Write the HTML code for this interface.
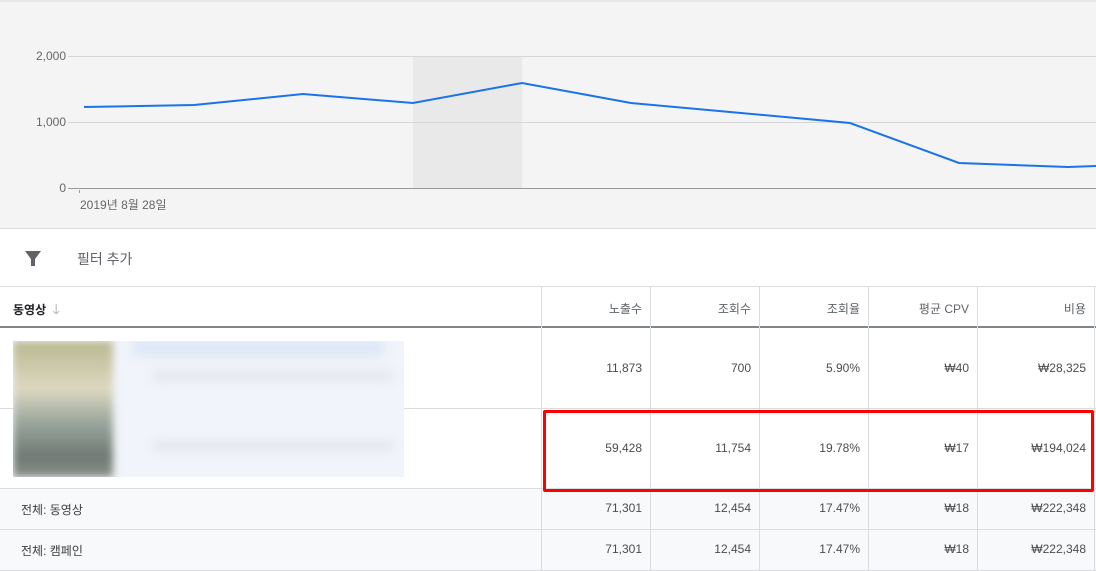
<!DOCTYPE html>
<html><head><meta charset="utf-8"><style>
body{margin:0;width:1096px;height:571px;overflow:hidden;font-family:"Liberation Sans","Noto Sans CJK KR",sans-serif;background:#fff;position:relative;color:#3c4043}
.abs{position:absolute}
.chart{left:0;top:0;width:1096px;height:229px;background:#f4f4f4;border-top:2px solid #e6e6e6;box-sizing:border-box;border-bottom:1px solid #ddd}
.yl{font-size:12px;color:#666;text-align:right;width:66px;left:0}
.vl{width:1px;background:#dadce0}
.hl{height:1px;background:#dadce0;left:0;width:1096px}
.c{font-size:12px;color:#4a4d50;text-align:right}
.h{color:#5f6368}
</style></head><body>
<div class="abs chart"></div>
<svg class="abs" style="left:0;top:0" width="1096" height="229">
<rect x="413" y="56" width="109" height="132" fill="#e9e9e9"/>
<line x1="68" y1="56.5" x2="1096" y2="56.5" stroke="#d6d6d6"/>
<line x1="68" y1="122.5" x2="1096" y2="122.5" stroke="#d6d6d6"/>
<line x1="68" y1="188.5" x2="1096" y2="188.5" stroke="#999"/>
<line x1="79.5" y1="190" x2="79.5" y2="193" stroke="#999"/>
<polyline fill="none" stroke="#1a73e8" stroke-width="2" points="84,107 194,105 303,94 413,103 522,83 631,103 741,113 850,123 959,163 1068,167 1096,166"/>
</svg>
<div class="abs yl" style="top:49px">2,000</div>
<div class="abs yl" style="top:115px">1,000</div>
<div class="abs yl" style="top:181px">0</div>
<div class="abs" style="left:80px;top:196px;font-size:12px;color:#666">2019년 8월 28일</div>
<svg class="abs" style="left:24px;top:250px" width="18" height="18"><path d="M1 1h16l-6 8v7h-4v-7z" fill="#5f6368"/></svg>
<div class="abs" style="left:77px;top:249px;font-size:14px;color:#5f6368">필터 추가</div>
<div class="abs hl" style="top:286px"></div>
<div class="abs" style="left:13px;top:299px;font-size:12px;font-weight:bold;color:#202124">동영상 <span style="color:#aaa;font-weight:normal;font-size:14px;margin-left:3px">🡓</span></div>
<div class="abs" style="left:0;top:326px;width:1096px;height:2px;background:#80868b"></div>
<div class="abs" style="left:0;top:488px;width:1096px;height:83px;background:#f8f9fa"></div>
<div class="abs hl" style="top:408px"></div>
<div class="abs hl" style="top:488px"></div>
<div class="abs hl" style="top:529px"></div>
<div class="abs hl" style="top:570px"></div>
<div class="abs vl" style="left:541px;top:287px;height:284px"></div>
<div class="abs vl" style="left:650px;top:287px;height:284px"></div>
<div class="abs vl" style="left:759px;top:287px;height:284px"></div>
<div class="abs vl" style="left:868px;top:287px;height:284px"></div>
<div class="abs vl" style="left:977px;top:287px;height:284px"></div>
<div class="abs vl" style="left:1094px;top:287px;height:284px"></div>
<div class="abs" style="left:13px;top:341px;width:391px;height:136px;overflow:hidden;background:#f1f4fa">
<div class="abs" style="left:0;top:0;width:100px;height:136px;background:linear-gradient(#b8b890,#ddd8c0 35%,#9aa69c 60%,#6f7a74 85%,#8a8e88);filter:blur(4px)"></div>
<div class="abs" style="left:120px;top:0;width:250px;height:14px;background:#d8e4f6;filter:blur(6px)"></div>
<div class="abs" style="left:140px;top:30px;width:240px;height:10px;background:#e4e6ec;filter:blur(5px)"></div>
<div class="abs" style="left:140px;top:100px;width:240px;height:10px;background:#e4e6ec;filter:blur(5px)"></div>
</div>
<div class="abs c h" style="left:541px;width:101px;top:300px">노출수</div>
<div class="abs c h" style="left:650px;width:101px;top:300px">조회수</div>
<div class="abs c h" style="left:759px;width:101px;top:300px">조회율</div>
<div class="abs c h" style="left:868px;width:101px;top:300px">평균 CPV</div>
<div class="abs c h" style="left:977px;width:109px;top:300px">비용</div>
<div class="abs c" style="left:541px;width:101px;top:361px">11,873</div>
<div class="abs c" style="left:650px;width:101px;top:361px">700</div>
<div class="abs c" style="left:759px;width:101px;top:361px">5.90%</div>
<div class="abs c" style="left:868px;width:101px;top:361px">₩40</div>
<div class="abs c" style="left:977px;width:109px;top:361px">₩28,325</div>
<div class="abs c" style="left:541px;width:101px;top:441px">59,428</div>
<div class="abs c" style="left:650px;width:101px;top:441px">11,754</div>
<div class="abs c" style="left:759px;width:101px;top:441px">19.78%</div>
<div class="abs c" style="left:868px;width:101px;top:441px">₩17</div>
<div class="abs c" style="left:977px;width:109px;top:441px">₩194,024</div>
<div class="abs" style="left:21px;top:501px;font-size:12px">전체: 동영상</div>
<div class="abs c" style="left:541px;width:101px;top:501px">71,301</div>
<div class="abs c" style="left:650px;width:101px;top:501px">12,454</div>
<div class="abs c" style="left:759px;width:101px;top:501px">17.47%</div>
<div class="abs c" style="left:868px;width:101px;top:501px">₩18</div>
<div class="abs c" style="left:977px;width:109px;top:501px">₩222,348</div>
<div class="abs" style="left:21px;top:542px;font-size:12px">전체: 캠페인</div>
<div class="abs c" style="left:541px;width:101px;top:542px">71,301</div>
<div class="abs c" style="left:650px;width:101px;top:542px">12,454</div>
<div class="abs c" style="left:759px;width:101px;top:542px">17.47%</div>
<div class="abs c" style="left:868px;width:101px;top:542px">₩18</div>
<div class="abs c" style="left:977px;width:109px;top:542px">₩222,348</div>
<div class="abs" style="left:543px;top:410px;width:545px;height:76px;border:3px solid #f00;border-radius:2px"></div>
</body></html>
